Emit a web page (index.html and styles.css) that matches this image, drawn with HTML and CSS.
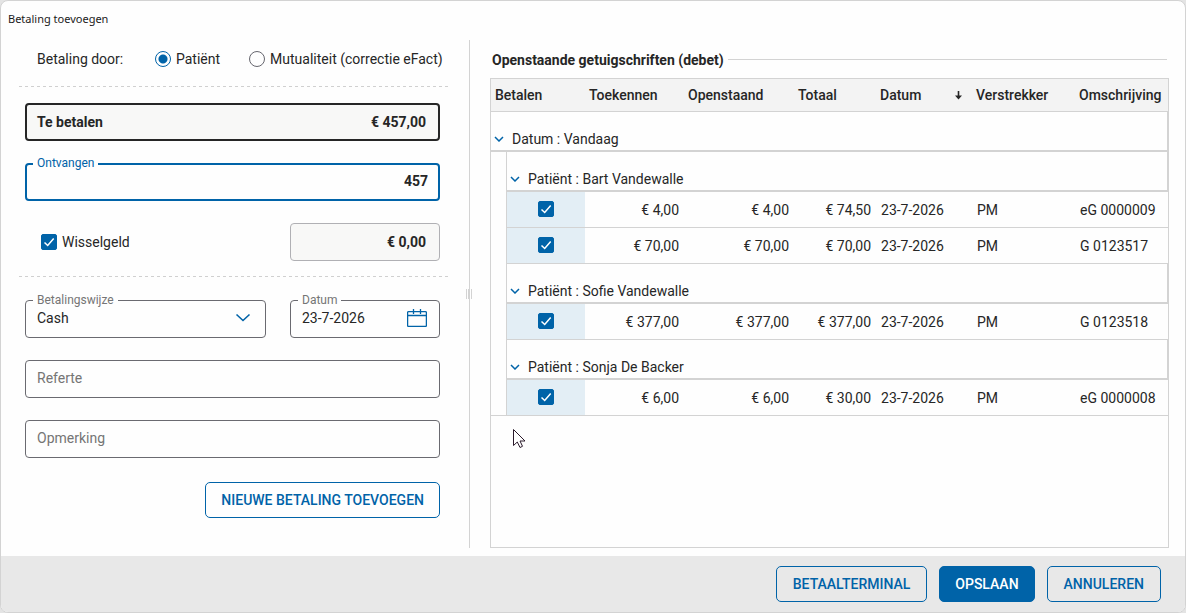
FILE: index.html
```html
<!DOCTYPE html>
<html lang="nl">
<head>
<meta charset="utf-8">
<title>Betaling toevoegen</title>
<link rel="stylesheet" href="styles.css">
</head>
<body>
<main class="dialog">
  <h1 class="dialog-title">Betaling toevoegen</h1>
  <div class="dialog-body">
    <form class="payment">
      <div class="payer" role="radiogroup" aria-labelledby="payer-label">
        <span class="payer-label" id="payer-label">Betaling door:</span>
        <label class="choice"><input class="radio" type="radio" name="payer" checked>Patiënt</label>
        <label class="choice"><input class="radio" type="radio" name="payer">Mutualiteit (correctie eFact)</label>
      </div>
      <hr class="divider">
      <div class="fields">
        <div class="field field-total">
          <label class="total-label" for="due">Te betalen</label>
          <input class="input amount" id="due" type="text" value="€ 457,00" readonly>
        </div>
        <div class="field field-active">
          <label class="float-label" for="received">Ontvangen</label>
          <input class="input amount" id="received" type="text" value="457">
        </div>
        <div class="pair">
          <label class="choice choice-change"><input class="check" type="checkbox" checked>Wisselgeld</label>
          <div class="field field-readonly short">
            <input class="input amount" type="text" value="€ 0,00" aria-label="Wisselgeld bedrag" readonly>
          </div>
        </div>
      </div>
      <hr class="divider">
      <div class="fields fields-details">
        <div class="pair">
          <div class="field grow">
            <label class="float-label" for="method">Betalingswijze</label>
            <select class="input" id="method"><option>Cash</option></select>
            <svg class="select-icon" width="16" height="10" viewBox="0 0 16 10"><path d="M1.500 1.500 8 7.500l6.500-6" fill="none" stroke="#0063a8" stroke-width="1.600"/></svg>
          </div>
          <div class="field short">
            <label class="float-label" for="date">Datum</label>
            <input class="input" id="date" type="text" value="23-7-2026">
            <button class="calendar" type="button" aria-label="Kalender">
              <svg width="20" height="18" viewBox="0 0 20 18" fill="none" stroke="#0063a8"><rect x=".6" y="2.600" width="18.800" height="14.800" rx="1" stroke-width="1.300"/><path d="M1 6.500h18M6.500 0v5M13.500 0v5" stroke-width="1.300"/></svg>
            </button>
          </div>
        </div>
        <div class="field"><input class="input" type="text" placeholder="Referte" aria-label="Referte"></div>
        <div class="field"><input class="input" type="text" placeholder="Opmerking" aria-label="Opmerking"></div>
      </div>
      <div class="payment-actions"><button class="button" type="button">NIEUWE BETALING TOEVOEGEN</button></div>
    </form>
    <div class="splitter"><span class="grip"></span></div>
    <section class="open-items">
      <h2 class="section-title">Openstaande getuigschriften (debet)</h2>
      <div class="grid">
        <table class="table">
          <colgroup><col class="c-indent"><col class="c-pay"><col class="c-assign"><col class="c-open"><col class="c-total"><col class="c-date"><col class="c-provider"><col></colgroup>
          <thead>
            <tr><th colspan="2">Betalen</th><th>Toekennen</th><th>Openstaand</th><th>Totaal</th><th><span class="sorted">Datum<svg width="7" height="9" viewBox="0 0 7 9"><path d="M2.700 0h1.600v4.500H7L3.500 8.500 0 4.500h2.700z" fill="#262626"/></svg></span></th><th>Verstrekker</th><th>Omschrijving</th></tr>
          </thead>
          <tbody>
            <tr><td class="group" colspan="8"><button class="toggle" type="button"><svg class="chevron" viewBox="0 0 10 6"><path d="m1 1 4 4 4-4"/></svg>Datum : Vandaag</button></td></tr>
            <tr><td class="indent"></td><td class="group" colspan="7"><button class="toggle" type="button"><svg class="chevron" viewBox="0 0 10 6"><path d="m1 1 4 4 4-4"/></svg>Patiënt : Bart Vandewalle</button></td></tr>
            <tr><td class="indent"></td><td class="pick"><input class="check" type="checkbox" aria-label="Betalen eG 0000009" checked></td><td class="num">€ 4,00</td><td class="num">€ 4,00</td><td class="num">€ 74,50</td><td>23-7-2026</td><td>PM</td><td>eG 0000009</td></tr>
            <tr><td class="indent"></td><td class="pick"><input class="check" type="checkbox" aria-label="Betalen G 0123517" checked></td><td class="num">€ 70,00</td><td class="num">€ 70,00</td><td class="num">€ 70,00</td><td>23-7-2026</td><td>PM</td><td>G 0123517</td></tr>
            <tr><td class="indent"></td><td class="group" colspan="7"><button class="toggle" type="button"><svg class="chevron" viewBox="0 0 10 6"><path d="m1 1 4 4 4-4"/></svg>Patiënt : Sofie Vandewalle</button></td></tr>
            <tr><td class="indent"></td><td class="pick"><input class="check" type="checkbox" aria-label="Betalen G 0123518" checked></td><td class="num">€ 377,00</td><td class="num">€ 377,00</td><td class="num">€ 377,00</td><td>23-7-2026</td><td>PM</td><td>G 0123518</td></tr>
            <tr><td class="indent"></td><td class="group" colspan="7"><button class="toggle" type="button"><svg class="chevron" viewBox="0 0 10 6"><path d="m1 1 4 4 4-4"/></svg>Patiënt : Sonja De Backer</button></td></tr>
            <tr class="last"><td class="indent"></td><td class="pick"><input class="check" type="checkbox" aria-label="Betalen eG 0000008" checked></td><td class="num">€ 6,00</td><td class="num">€ 6,00</td><td class="num">€ 30,00</td><td>23-7-2026</td><td>PM</td><td>eG 0000008</td></tr>
          </tbody>
        </table>
      </div>
    </section>
  </div>
  <footer class="dialog-footer">
    <button class="button button-wide" type="button">BETAALTERMINAL</button>
    <button class="button button-primary" type="button">OPSLAAN</button>
    <button class="button button-wide" type="button">ANNULEREN</button>
  </footer>
  <svg class="pointer" width="13" height="20" viewBox="0 0 13 20"><path d="M.5.5v16l3.800-3.500 2.700 5.500 2.500-1.200-2.500-5.300h5z" fill="#fff" stroke="#2b1a2b"/></svg>
</main>
</body>
</html>
```

FILE: styles.css
```css
* {
  box-sizing: border-box;
}

body {
  margin: 0;
  background: #e4e4e4;
  color: #262626;
  font: 14px/20px Roboto, sans-serif;
}

button,
input,
select {
  margin: 0;
  font: inherit;
  color: inherit;
}

.dialog {
  position: relative;
  display: flex;
  flex-direction: column;
  min-height: 100vh;
  border: 1px solid #d3d3d3;
  border-radius: 8px;
  background: #fefefe;
  overflow: hidden;
}

.dialog-title {
  margin: 0;
  padding: 8px 7px 11px;
  font: 11px/20px "Noto Sans", sans-serif;
  color: #1a1a1a;
}

.dialog-body {
  flex: 1;
  display: flex;
  padding: 0 16px 8px 18px;
}

/* Payment form */

.payment {
  flex: 0 0 430px;
}

.payer {
  display: flex;
  align-items: center;
  height: 46px;
  padding: 0 0 8px 18px;
}

.payer-label {
  width: 118px;
}

.choice {
  display: flex;
  align-items: center;
  gap: 5px;
}

.payer .choice + .choice {
  margin-left: 29px;
}

.radio,
.check {
  appearance: none;
  flex: none;
  display: block;
  width: 16px;
  height: 16px;
}

.radio {
  border: 1px solid #66666e;
  border-radius: 50%;
}

.radio:checked {
  border-color: #0063a8;
  background: radial-gradient(circle, #0063a8 4px, #fefefe 5px);
}

.check {
  border: 1px solid #0063a8;
  border-radius: 2px;
}

.check:checked {
  background: #0063a8 url("data:image/svg+xml,%3Csvg xmlns='http://www.w3.org/2000/svg' viewBox='0 0 14 14'%3E%3Cpath d='M2.500 7.500 5.700 10.500 11.700 3.500' fill='none' stroke='white' stroke-width='1.500'/%3E%3C/svg%3E") center / 14px 14px no-repeat;
}

.divider {
  height: 1px;
  margin: 0;
  border: 0;
  background: repeating-linear-gradient(90deg, #d0d0d0 0 3px, transparent 3px 6px);
}

.fields {
  display: flex;
  flex-direction: column;
  gap: 22px;
  padding: 16px 9px 15px 6px;
}

.fields-details {
  padding-top: 23px;
  padding-bottom: 24px;
}

.pair {
  display: flex;
  justify-content: space-between;
  gap: 24px;
}

.choice-change {
  padding-left: 16px;
}

.field {
  position: relative;
  display: flex;
  align-items: center;
  height: 38px;
  padding-bottom: 2px;
  border: 1px solid #6a6a70;
  border-radius: 4px;
}

.grow {
  flex: 1;
}

.short {
  width: 150px;
}

.input {
  flex: 1;
  min-width: 0;
  width: 100%;
  height: 32px;
  padding: 0 11px;
  border: 0;
  outline: 0;
  appearance: none;
  background: transparent;
}

.input::placeholder {
  color: #757575;
  opacity: 1;
}

.amount {
  font-weight: 700;
  text-align: right;
  padding-right: 12px;
}

.field-total {
  padding: 0;
  border: 2px solid #262626;
  background: #f8f8f7;
}

.total-label {
  flex: none;
  padding-left: 10px;
  font-weight: 700;
}

.field-active {
  border: 2px solid #0063a8;
}

.field-active .amount {
  padding-right: 10px;
}

.field-readonly {
  padding: 0;
  border-color: #b0b0b4;
  background: #f8f8f7;
}

.field-readonly .amount {
  padding-right: 13px;
}

.float-label {
  position: absolute;
  top: -9px;
  left: 7px;
  padding: 0 4px;
  background: #fefefe;
  color: #757575;
  font-size: 12px;
  line-height: 16px;
}

.field-active .float-label {
  top: -10px;
  left: 6px;
  color: #0063a8;
}

.select-icon {
  position: absolute;
  right: 14px;
  top: 12px;
  pointer-events: none;
}

.calendar {
  flex: none;
  display: flex;
  margin-right: 12px;
  padding: 0;
  border: 0;
  background: none;
}

.payment-actions {
  display: flex;
  justify-content: flex-end;
  padding-right: 9px;
}

.button {
  height: 36px;
  padding: 0 15px;
  border: 1px solid #0063a8;
  border-radius: 5px;
  background: transparent;
  color: #0063a8;
  font-weight: 500;
}

.button-wide {
  padding: 0 16px;
}

.button-primary {
  background: #0063a8;
  color: #fff;
}

/* Splitter */

.splitter {
  position: relative;
  flex: none;
  width: 1px;
  margin: 0 20px;
  background: #d3d3d3;
}

.grip {
  position: absolute;
  top: 249px;
  left: -3px;
  width: 6px;
  height: 10px;
  border: solid #d3d3d3;
  border-width: 0 1px;
  background: linear-gradient(90deg, #fefefe 1px, #d3d3d3 1px 3px, #fefefe 3px);
}

/* Open items */

.open-items {
  flex: 1;
  min-width: 0;
  display: flex;
  flex-direction: column;
}

.section-title {
  display: flex;
  gap: 4px;
  margin: 0;
  padding: 10px 2px 8px;
  font-size: 14px;
  line-height: 20px;
  font-weight: 700;
}

.section-title::after {
  content: "";
  flex: 1;
  height: 1px;
  margin-top: 9px;
  background: #d3d3d3;
}

.grid {
  flex: 1;
  border: 1px solid #d3d3d3;
}

.table {
  width: 100%;
  table-layout: fixed;
  border-collapse: separate;
  border-spacing: 0;
}

.c-indent { width: 16px; }
.c-pay { width: 78px; }
.c-assign { width: 99px; }
.c-open { width: 110px; }
.c-total { width: 82px; }
.c-date { width: 96px; }
.c-provider { width: 103px; }

.table th {
  height: 33px;
  padding: 0 4px;
  border-bottom: 1px solid #d3d3d3;
  background: #f3f3f3;
  font-weight: 500;
  text-align: left;
  white-space: nowrap;
}

.sorted {
  display: flex;
  align-items: center;
  justify-content: space-between;
  padding-right: 6px;
}

.table td {
  height: 36px;
  padding: 0 5px;
  border-bottom: 1px solid #d3d3d3;
  white-space: nowrap;
}

.table .num {
  text-align: right;
}

.table .pick {
  padding-bottom: 2px;
  background: #e3eef5;
}

.pick .check {
  margin: 0 auto;
}

.table .indent {
  padding: 0;
  border-right: 1px solid #d3d3d3;
  border-bottom: 0;
}

.table .last .indent {
  border-bottom: 1px solid #d3d3d3;
}

.table .group {
  height: 40px;
  padding: 16px 3px 0;
  border-right: 1px solid #d3d3d3;
  border-bottom: 2px solid #d3d3d3;
}

.toggle {
  display: flex;
  align-items: center;
  gap: 8px;
  height: 22px;
  padding: 0;
  border: 0;
  background: none;
}

.chevron {
  width: 10px;
  height: 6px;
  fill: none;
  stroke: #0063a8;
  stroke-width: 1.5;
}

/* Footer */

.dialog-footer {
  display: flex;
  justify-content: flex-end;
  gap: 12px;
  padding: 10px 24px;
  background: #e8e8e8;
}

.pointer {
  position: absolute;
  left: 512px;
  top: 428px;
}
```
